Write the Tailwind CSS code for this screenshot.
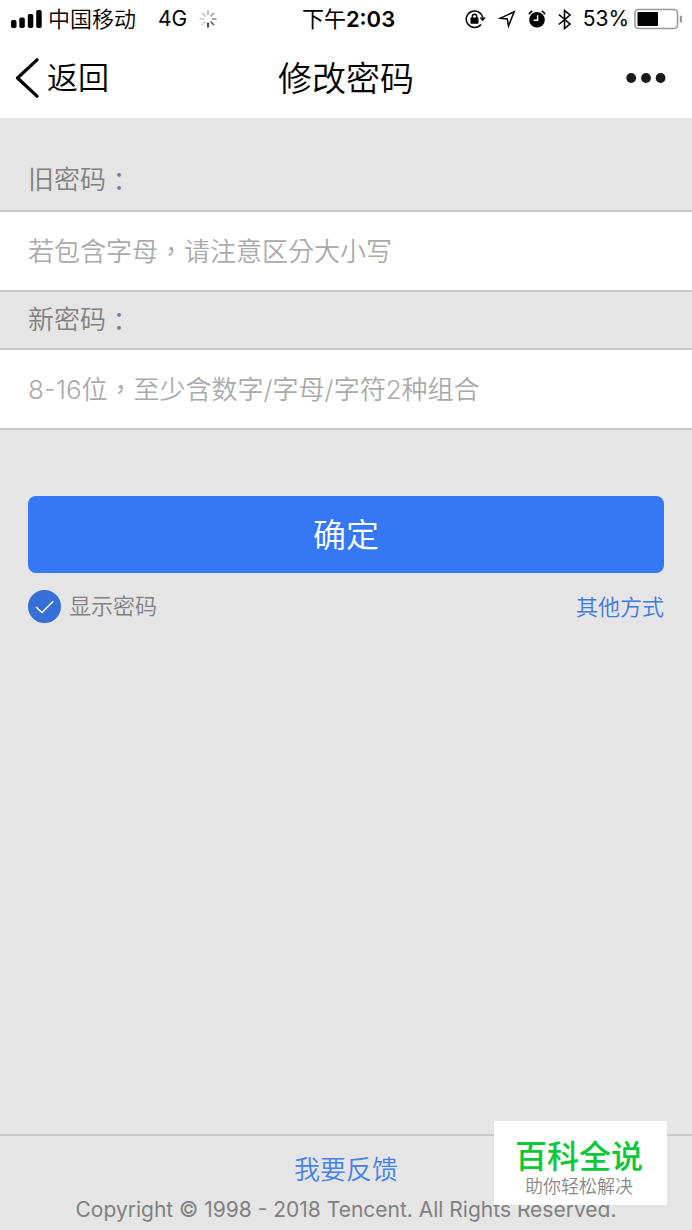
<!DOCTYPE html>
<html lang="zh-CN">
<head>
<meta charset="utf-8">
<meta name="viewport" content="width=device-width, initial-scale=1">
<title>修改密码</title>
<script src="https://cdn.jsdelivr.net/npm/@tailwindcss/browser@4"></script>
</head>
<body class="relative flex min-h-screen flex-col bg-[#e5e5e5] font-['Inter','Noto_Sans_CJK_SC',sans-serif] text-[#808080]">
  <header class="bg-white text-black">
    <div class="grid h-[38px] grid-cols-[1fr_auto_1fr] items-center pr-2.5 pl-[11px] text-[22px] leading-[38px]">
      <div class="flex items-center">
        <svg class="h-[18px] w-[31px]" viewBox="0 0 31 18" aria-hidden="true">
          <rect x="0" y="10" width="5.5" height="8" rx="1.8"/><rect x="8.3" y="7.5" width="5.5" height="10.5" rx="1.8"/><rect x="16.8" y="4" width="5.5" height="14" rx="1.8"/><rect x="25.2" y="0" width="5.5" height="18" rx="1.8"/>
        </svg>
        <span class="ml-1.5 font-[350]">中国移动</span>
        <span class="ml-[22px] text-[21px]">4G</span>
        <svg class="ml-3 size-[18px]" viewBox="-9 -9 18 18" stroke-width="1.5" stroke-linecap="round" aria-hidden="true">
          <path d="M0-4.200V-8" stroke="#aaa"/><path d="M3-3L5.700-5.700" stroke="#999"/><path d="M4.200 0H8" stroke="#888"/><path d="M3 3L5.700 5.700" stroke="#555"/><path d="M0 4.200V8" stroke="#111"/><path d="M-3 3L-5.700 5.700" stroke="#ccc"/><path d="M-4.200 0H-8" stroke="#ccc"/><path d="M-3-3L-5.700-5.700" stroke="#bbb"/>
        </svg>
      </div>
      <div class="pl-1 text-[22px] font-semibold"><span class="font-normal">下午</span>2:03</div>
      <div class="flex items-center justify-end">
        <svg class="h-5 w-[21px]" viewBox="0 0 21 20" fill="none" stroke="#000" aria-hidden="true">
          <path d="M16 15.500A8.300 8.300 0 1 1 17.700 8.500" stroke-width="1.500"/>
          <path d="M14.500 8.500H20.800L17.700 12.300Z" fill="#000" stroke="none"/>
          <rect x="5.500" y="8.500" width="8" height="6.200" rx=".6" fill="#000" stroke="none"/>
          <path d="M7.300 9V7.500a2.200 2.200 0 0 1 4.400 0V9" stroke-width="1.400"/>
        </svg>
        <svg class="ml-3 h-[18px] w-[18px]" viewBox="0 0 18 18" fill="none" stroke="#000" stroke-width="1.500" stroke-linejoin="miter" aria-hidden="true">
          <path d="M16.200 1.800L2 8.300L9.300 9L10.500 16Z"/>
        </svg>
        <svg class="ml-3 h-[18px] w-[18px]" viewBox="0 0 18 18" aria-hidden="true">
          <circle cx="9" cy="9.800" r="7.800"/>
          <path d="M1 4.300A6 6 0 0 1 4.300 1M13.700 1A6 6 0 0 1 17 4.300" fill="none" stroke="#000" stroke-width="1.600"/>
          <path d="M9.600 5.200V10.200H5.600" fill="none" stroke="#fff" stroke-width="1.500"/>
        </svg>
        <svg class="ml-3 h-[21px] w-[13px]" viewBox="0 0 13 21" fill="none" stroke="#000" stroke-width="1.600" aria-hidden="true">
          <path d="M.8 5.500L12 15L6.500 19.500V1.500L12 6L.8 15.500"/>
        </svg>
        <span class="ml-3 text-[21px]">53%</span>
        <svg class="ml-[5px] h-[22px] w-12" viewBox="0 0 48 22" aria-hidden="true">
          <rect x="1" y="1.500" width="42.500" height="19" rx="3.500" fill="none" stroke="#999" stroke-width="1.600"/>
          <rect x="3.500" y="4" width="20.500" height="14" rx="1"/>
          <path d="M45.800 7.500a3.400 3.400 0 0 1 0 7Z" fill="#999"/>
        </svg>
      </div>
    </div>
    <nav class="grid h-20 grid-cols-[1fr_auto_1fr] items-center px-[15px] font-[350]">
      <a href="#" class="flex items-center text-[31px] leading-10">
        <svg class="h-10 w-6" viewBox="0 0 24 40" fill="none" stroke="#000" stroke-width="3.200" stroke-linecap="round" stroke-linejoin="round" aria-hidden="true"><path d="M22 1.800L2.500 20L22 38.200"/></svg>
        <span class="ml-2">返回</span>
      </a>
      <h1 class="pt-0.5 text-[34px] leading-10">修改密码</h1>
      <button type="button" aria-label="更多" class="mr-[11px] justify-self-end">
        <svg class="h-3 w-10" viewBox="0 0 40 12" fill="#1a1a1a" aria-hidden="true"><circle cx="5.200" cy="6" r="4.900"/><circle cx="20" cy="6" r="4.900"/><circle cx="34.600" cy="6" r="4.900"/></svg>
      </button>
    </nav>
  </header>

  <main class="flex-1">
    <form>
      <div class="text-[26px] font-[350]">
        <label for="old" class="flex px-7 pt-[42px] pb-2.5 leading-10">旧密码<span lang="zh-TW" class="font-['Noto_Sans_CJK_TC',sans-serif]">：</span></label>
        <input id="old" lang="zh-TW" type="text" placeholder="若包含字母，请注意区分大小写" class="block h-[82px] w-full rounded-none border-y-2 border-[#cacaca] bg-white px-7 font-['Inter','Noto_Sans_CJK_TC',sans-serif] outline-none placeholder:text-[#aaa]">
        <label for="new" class="flex px-7 pt-2 pb-2 leading-10">新密码<span lang="zh-TW" class="font-['Noto_Sans_CJK_TC',sans-serif]">：</span></label>
        <input id="new" lang="zh-TW" type="text" placeholder="8-16位，至少含数字/字母/字符2种组合" class="block h-[82px] w-full rounded-none border-y-2 border-[#cacaca] bg-white px-7 font-['Inter','Noto_Sans_CJK_TC',sans-serif] outline-none placeholder:text-[#aaa]">
      </div>
      <div class="px-7 pt-[66px]">
        <button type="submit" class="h-[77px] w-full rounded-lg bg-[#3478f6] pt-0.5 text-[33px] font-[350] text-white">确定</button>
        <div class="mt-3.5 flex items-center justify-between text-[22px] leading-9 font-[350]">
          <label class="flex items-center gap-2">
            <span class="grid size-[33px]">
              <input type="checkbox" checked class="col-start-1 row-start-1 size-[33px] appearance-none rounded-full border-2 border-[#366fd6] checked:bg-[#366fd6]">
              <svg class="pointer-events-none col-start-1 row-start-1 size-[33px]" viewBox="0 0 33 33" fill="none" stroke="#fff" stroke-width="1.400" aria-hidden="true"><path d="M8 17L14 22.500L25.200 11.200"/></svg>
            </span>
            显示密码
          </label>
          <a href="#" class="pt-0.5 text-[#3f78e0]">其他方式</a>
        </div>
      </div>
    </form>
  </main>

  <footer class="flex h-24 flex-col items-center border-t-2 border-[#cacaca] pt-3.5">
    <a href="#" class="text-[26px] leading-10 font-[350] text-[#4581e8]">我要反馈</a>
    <p class="mt-1 text-[21px] leading-8 whitespace-nowrap">Copyright © 1998 - 2018 Tencent. All Rights Reserved.</p>
  </footer>

  <aside class="absolute right-[25px] bottom-[25px] flex h-[84px] w-[173px] flex-col items-center bg-white pt-[18px] pr-[3px]">
    <strong class="text-[32px] leading-9 font-medium text-[#0ac838]">百科全说</strong>
    <span class="text-[18px] leading-6 font-[350] text-[#888]">助你轻松解决</span>
  </aside>
</body>
</html>
